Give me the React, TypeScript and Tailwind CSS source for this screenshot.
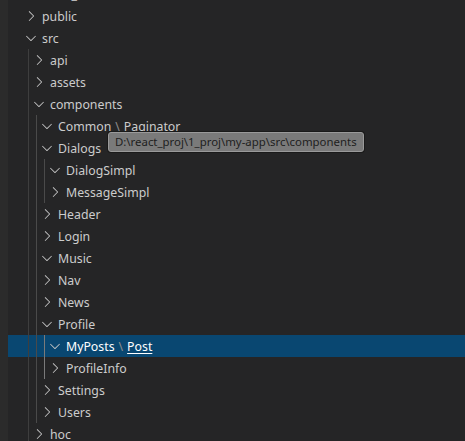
import React from "react";

type Row = {
  label: React.ReactNode;
  level: number;
  open: boolean;
  selected?: boolean;
  guides?: string[];
};

const G0 = "bg-[#3e3e3e]";
const G1 = "bg-[#4a4a4a]";
const G2 = "bg-[#4a4a4a]";
const GA = "bg-[#7a7a7a]";

const Sep = () => <span className="text-[#8d8d8d] px-[4px]">\</span>;

const rows: Row[] = [
  { label: "node_modules", level: 0, open: false },
  { label: "public", level: 0, open: false },
  { label: "src", level: 0, open: true },
  { label: "api", level: 1, open: false, guides: [G0] },
  { label: "assets", level: 1, open: false, guides: [G0] },
  { label: "components", level: 1, open: true, guides: [G0] },
  {
    label: (
      <>
        Common
        <Sep />
        Paginator
      </>
    ),
    level: 2,
    open: true,
    guides: [G0, G1],
  },
  { label: "Dialogs", level: 2, open: true, guides: [G0, G1] },
  { label: "DialogSimpl", level: 3, open: true, guides: [G0, G1, G2] },
  { label: "MessageSimpl", level: 3, open: false, guides: [G0, G1, G2] },
  { label: "Header", level: 2, open: false, guides: [G0, G1] },
  { label: "Login", level: 2, open: false, guides: [G0, G1] },
  { label: "Music", level: 2, open: true, guides: [G0, G1] },
  { label: "Nav", level: 2, open: false, guides: [G0, G1] },
  { label: "News", level: 2, open: false, guides: [G0, G1] },
  { label: "Profile", level: 2, open: true, guides: [G0, G1] },
  {
    label: (
      <>
        MyPosts
        <Sep />
        <span className="underline underline-offset-[2px]">Post</span>
      </>
    ),
    level: 3,
    open: true,
    selected: true,
    guides: [G0, G1, GA],
  },
  { label: "ProfileInfo", level: 3, open: false, guides: [G0, G1, GA] },
  { label: "Settings", level: 2, open: false, guides: [G0, G1] },
  { label: "Users", level: 2, open: false, guides: [G0, G1] },
  { label: "hoc", level: 1, open: false, guides: [G0] },
];

function Chevron({ open }: { open: boolean }) {
  return (
    <svg width="16" height="16" viewBox="0 0 16 16" fill="#c5c5c5">
      {open ? (
        <path d="M7.976 10.072l4.357-4.357.62.618L8.284 11h-.618L3 6.333l.619-.618 4.357 4.357z" />
      ) : (
        <path d="M10.072 8.024L5.715 3.667l.618-.62L11 7.716v.618L6.333 13l-.618-.619 4.357-4.357z" />
      )}
    </svg>
  );
}

function TreeRow({ row }: { row: Row }) {
  return (
    <div
      className={`flex h-[22px] items-stretch pl-[15px] ${
        row.selected ? "bg-[#094771] text-white" : "text-[#cccccc]"
      }`}
    >
      {(row.guides ?? []).map((g, i) => (
        <div key={i} className="w-[8px] shrink-0 flex">
          <div className={`ml-[5px] w-px h-full ${g}`} />
        </div>
      ))}
      <div className="w-[16px] shrink-0 flex items-center justify-center">
        <Chevron open={row.open} />
      </div>
      <div className="ml-[3px] pt-[1px] flex items-center whitespace-nowrap leading-[21px]">
        {row.label}
      </div>
    </div>
  );
}

export default function App() {
  return (
    <div
      className="relative w-[465px] h-[441px] overflow-hidden bg-[#252526] flex text-[12.3px]"
      style={{ fontFamily: '"Noto Sans", "Open Sans", sans-serif' }}
    >
      <div className="w-[8px] shrink-0 bg-[#2b2b2b]" />
      <div className="flex-1 flex flex-col -mt-[17px]">
        {rows.map((r, i) => (
          <TreeRow key={i} row={r} />
        ))}
      </div>
      <div className="absolute left-[108px] top-[132px] h-[20px] px-[6px] flex items-center rounded-[3px] bg-[#7a7a7a] border border-[#9a9a9a] shadow-[0_0_0_1px_#1a1a1a] text-[11.4px] text-[#1e1e1e] whitespace-nowrap">
        D:\react_proj\1_proj\my-app\src\components
      </div>
    </div>
  );
}
